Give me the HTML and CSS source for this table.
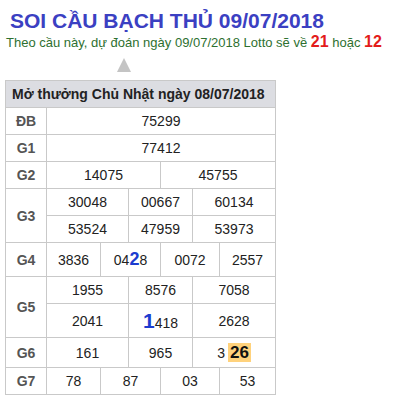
FILE: index.html
```html
<!DOCTYPE html>
<html lang="vi">

<head>
    <meta charset="UTF-8" />
    <meta name="viewport" content="width=device-width, initial-scale=1" />
    <title>Soi cầu bạch thủ</title>
    <link rel="stylesheet" href="styles.css">
</head>

<body>
    <h1 class="tieu-de">SOI CẦU BẠCH THỦ 09/07/2018</h1>
    <p class="du-doan">Theo cầu này, dự đoán ngày 09/07/2018 Lotto sẽ về <b class="so-do">21</b> hoặc <b class="so-do">12</b></p>
    <div class="mui-ten"></div>

    <table class="bang-kq">
        <colgroup>
            <col style="width: 41px">
            <col style="width: 54px">
            <col style="width: 28px">
            <col style="width: 32px">
            <col style="width: 32px">
            <col style="width: 27px">
            <col style="width: 56px">
        </colgroup>
        <thead>
            <tr>
                <th colspan="7">Mở thưởng Chủ Nhật ngày 08/07/2018</th>
            </tr>
        </thead>
        <tbody>
            <tr>
                <td class="giai">ĐB</td>
                <td colspan="6">75299</td>
            </tr>
            <tr>
                <td class="giai">G1</td>
                <td colspan="6">77412</td>
            </tr>
            <tr>
                <td class="giai">G2</td>
                <td colspan="3">14075</td>
                <td colspan="3">45755</td>
            </tr>
            <tr>
                <td class="giai" rowspan="2">G3</td>
                <td colspan="2">30048</td>
                <td colspan="2">00667</td>
                <td colspan="2">60134</td>
            </tr>
            <tr>
                <td colspan="2">53524</td>
                <td colspan="2">47959</td>
                <td colspan="2">53973</td>
            </tr>
            <tr class="hang-cao">
                <td class="giai">G4</td>
                <td>3836</td>
                <td colspan="2">04<span class="so-xanh">2</span>8</td>
                <td colspan="2">0072</td>
                <td>2557</td>
            </tr>
            <tr>
                <td class="giai" rowspan="2">G5</td>
                <td colspan="2">1955</td>
                <td colspan="2">8576</td>
                <td colspan="2">7058</td>
            </tr>
            <tr class="hang-cao">
                <td colspan="2">2041</td>
                <td colspan="2"><span class="so-xanh lon">1</span>418</td>
                <td colspan="2">2628</td>
            </tr>
            <tr class="hang-g6">
                <td class="giai">G6</td>
                <td colspan="2">161</td>
                <td colspan="2">965</td>
                <td colspan="2">3<span class="to-vang">26</span></td>
            </tr>
            <tr>
                <td class="giai">G7</td>
                <td>78</td>
                <td colspan="2">87</td>
                <td colspan="2">03</td>
                <td>53</td>
            </tr>
        </tbody>
    </table>
</body>

</html>
```

FILE: styles.css
```css
body {
    font-family: "Liberation Sans", Arial, sans-serif;
    margin: 0;
    background-color: white;
    color: #222;
}

.tieu-de {
    margin: 9px 0 0 10px;
    font-size: 21px;
    line-height: 24px;
    color: #3b40c2;
}

.du-doan {
    margin: 0 0 0 6px;
    font-size: 13px;
    line-height: 18px;
    color: #2e7030;
}

.so-do {
    color: #e31b1b;
    font-size: 16px;
}

.mui-ten {
    width: 0;
    height: 0;
    margin: 6px 0 0 117px;
    border-left: 7.5px solid transparent;
    border-right: 7.5px solid transparent;
    border-bottom: 14px solid #c4c4c4;
}

.bang-kq {
    margin: 8px 0 0 5px;
    width: 270px;
    table-layout: fixed;
    border-collapse: collapse;
    font-size: 14px;
    box-shadow: 0 2px 0 #c8c8c8;
}

.bang-kq th,
.bang-kq td {
    border: 1px solid #c9c9c9;
    padding: 0;
    height: 26px;
    text-align: center;
}

.bang-kq th {
    background-color: #dcdde2;
    text-align: left;
    padding-left: 6px;
    font-weight: bold;
    color: #222;
}

.bang-kq .giai {
    font-weight: bold;
    color: #555;
}

.hang-cao td {
    height: 33px;
}

.hang-g6 td {
    height: 29px;
}

.so-xanh {
    color: #1c3ccf;
    font-weight: bold;
    font-size: 18px;
}

.so-xanh.lon {
    font-size: 21px;
}

.to-vang {
    background-color: #ffd27c;
    font-weight: bold;
    font-size: 17px;
    padding: 0 2px;
    margin-left: 3px;
    color: #111;
}
```
